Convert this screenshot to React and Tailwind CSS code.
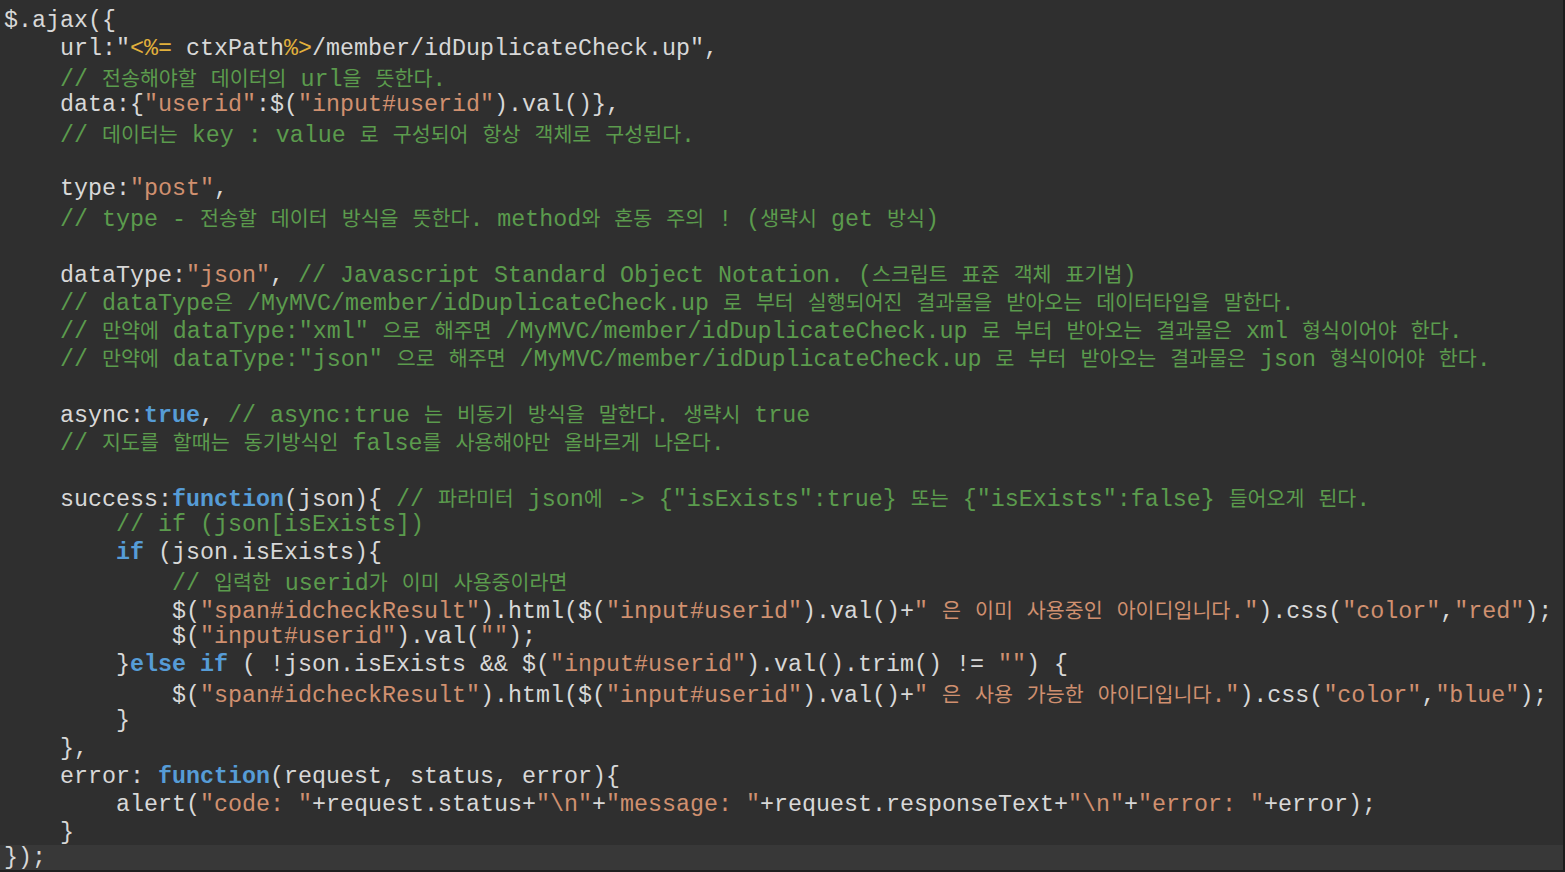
import React from 'react';

// token kinds: p = plain, s = string, c = comment, k = keyword, t = jsp tag
const COLORS = {
    p: 'text-[#d8d8d8]',
    s: 'text-[#d0906f]',
    c: 'text-[#5b9b4d]',
    k: 'text-[#569cd6] font-bold',
    t: 'text-[#e2b13c]',
};

const LINES = [
    [['p', '$.ajax({']],
    [['p', '    url:"'], ['t', '<%='], ['p', ' ctxPath'], ['t', '%>'], ['p', '/member/idDuplicateCheck.up",']],
    [['p', '    '], ['c', '// 전송해야할 데이터의 url을 뜻한다.']],
    [['p', '    data:{'], ['s', '"userid"'], ['p', ':$('], ['s', '"input#userid"'], ['p', ').val()},']],
    [['p', '    '], ['c', '// 데이터는 key : value 로 구성되어 항상 객체로 구성된다.']],
    [],
    [['p', '    type:'], ['s', '"post"'], ['p', ',']],
    [['p', '    '], ['c', '// type - 전송할 데이터 방식을 뜻한다. method와 혼동 주의 ! (생략시 get 방식)']],
    [],
    [['p', '    dataType:'], ['s', '"json"'], ['p', ', '], ['c', '// Javascript Standard Object Notation. (스크립트 표준 객체 표기법)']],
    [['p', '    '], ['c', '// dataType은 /MyMVC/member/idDuplicateCheck.up 로 부터 실행되어진 결과물을 받아오는 데이터타입을 말한다.']],
    [['p', '    '], ['c', '// 만약에 dataType:"xml" 으로 해주면 /MyMVC/member/idDuplicateCheck.up 로 부터 받아오는 결과물은 xml 형식이어야 한다.']],
    [['p', '    '], ['c', '// 만약에 dataType:"json" 으로 해주면 /MyMVC/member/idDuplicateCheck.up 로 부터 받아오는 결과물은 json 형식이어야 한다.']],
    [],
    [['p', '    async:'], ['k', 'true'], ['p', ', '], ['c', '// async:true 는 비동기 방식을 말한다. 생략시 true']],
    [['p', '    '], ['c', '// 지도를 할때는 동기방식인 false를 사용해야만 올바르게 나온다.']],
    [],
    [['p', '    success:'], ['k', 'function'], ['p', '(json){ '], ['c', '// 파라미터 json에 -> {"isExists":true} 또는 {"isExists":false} 들어오게 된다.']],
    [['p', '        '], ['c', '// if (json[isExists])']],
    [['p', '        '], ['k', 'if'], ['p', ' (json.isExists){']],
    [['p', '            '], ['c', '// 입력한 userid가 이미 사용중이라면']],
    [['p', '            $('], ['s', '"span#idcheckResult"'], ['p', ').html($('], ['s', '"input#userid"'], ['p', ').val()+'], ['s', '" 은 이미 사용중인 아이디입니다."'], ['p', ').css('], ['s', '"color"'], ['p', ','], ['s', '"red"'], ['p', ');']],
    [['p', '            $('], ['s', '"input#userid"'], ['p', ').val('], ['s', '""'], ['p', ');']],
    [['p', '        }'], ['k', 'else'], ['p', ' '], ['k', 'if'], ['p', ' ( !json.isExists && $('], ['s', '"input#userid"'], ['p', ').val().trim() != '], ['s', '""'], ['p', ') {']],
    [['p', '            $('], ['s', '"span#idcheckResult"'], ['p', ').html($('], ['s', '"input#userid"'], ['p', ').val()+'], ['s', '" 은 사용 가능한 아이디입니다."'], ['p', ').css('], ['s', '"color"'], ['p', ','], ['s', '"blue"'], ['p', ');']],
    [['p', '        }']],
    [['p', '    },']],
    [['p', '    error: '], ['k', 'function'], ['p', '(request, status, error){']],
    [['p', '        alert('], ['s', '"code: "'], ['p', '+request.status+'], ['s', '"\\n"'], ['p', '+'], ['s', '"message: "'], ['p', '+request.responseText+'], ['s', '"\\n"'], ['p', '+'], ['s', '"error: "'], ['p', '+error);']],
    [['p', '    }']],
    [['p', '});']],
];

function Runs({ text }) {
    const parts = text.split(/([\u3131-\uD79D]+)/);
    return parts.map((part, i) =>
        i % 2 === 1 ? (
            <span key={i} className="font-['Noto_Sans_CJK_KR',sans-serif] text-[20.6px]">{part}</span>
        ) : (
            <React.Fragment key={i}>{part}</React.Fragment>
        ),
    );
}

export default function App() {
    return (
        <div className="w-[1565px] h-[872px] overflow-hidden bg-[#2f2f2f] flex flex-col">
            <div className="flex-1 flex min-h-0">
                <div className="flex-1 flex flex-col pt-[5px] font-['Liberation_Mono',monospace] text-[23.33px] whitespace-pre">
                    {LINES.map((tokens, i) => {
                        const last = i === LINES.length - 1;
                        return (
                            <div
                                key={i}
                                className={last ? 'h-[25px] leading-[26px] shrink-0 px-[4px] bg-[#383838]' : 'h-[28px] leading-[28px] pt-[2px] shrink-0 px-[4px]'}
                            >
                                {tokens.map(([kind, text], j) => (
                                    <span key={j} className={COLORS[kind]}>
                                        <Runs text={text} />
                                    </span>
                                ))}
                            </div>
                        );
                    })}
                </div>
                <div className="w-[2px] bg-[#1c1c1c]" />
            </div>
            <div className="h-[2px] shrink-0 bg-[#1f1f1f]" />
        </div>
    );
}
